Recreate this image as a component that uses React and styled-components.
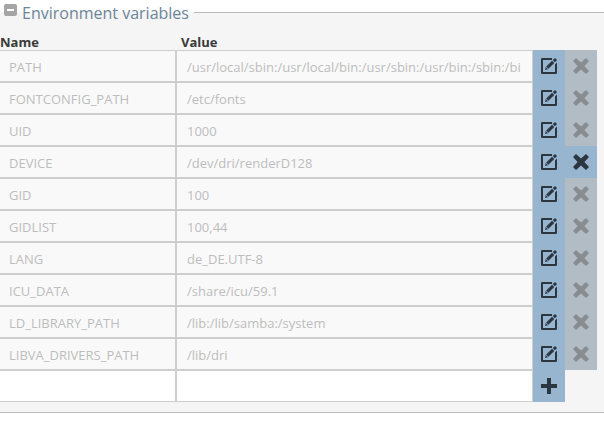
import React from "react";
import styled, { createGlobalStyle } from "styled-components";

const GlobalStyle = createGlobalStyle`
  * {
    box-sizing: border-box;
  }
  body {
    margin: 0;
    background-color: #ffffff;
    font-family: "Open Sans", "Noto Sans", sans-serif;
    font-size: 13px;
    overflow-x: hidden;
  }
`;

const Section = styled.fieldset`
  min-width: 0;
  margin: 0;
  padding: 9px 7px 10px 0;
  border: solid #bbbbbb;
  border-width: 1px 0;
  background-color: #f5f5f5;
`;

const Legend = styled.legend`
  display: flex;
  align-items: center;
  height: 25px;
  padding: 0 5px 0 4px;
  font-size: 16px;
  line-height: 24px;
  color: #6c8599;
`;

const Toggle = styled.button`
  display: flex;
  align-self: flex-start;
  margin: 4px 5px 0 0;
  padding: 0;
  border: none;
  background: none;
  cursor: pointer;
`;

const Table = styled.table`
  width: 100%;
  table-layout: fixed;
  border-collapse: collapse;
`;

const Heading = styled.th`
  width: ${({ $width }) => $width || "auto"};
  height: 16px;
  padding: 0 0 0 ${({ $indent }) => $indent || "0"};
  font-weight: 700;
  line-height: 16px;
  text-align: left;
  color: #3a3a3a;
`;

const Cell = styled.td`
  height: 32px;
  padding: 0;
`;

const Field = styled.input`
  display: block;
  width: 100%;
  height: 32px;
  margin: 0;
  padding: 2px 11px 0 10px;
  border: 1px solid #cecece;
  border-radius: 0;
  background-color: #ffffff;
  color: #444444;
  font: inherit;
  &:disabled {
    background-color: #f9f9f9;
    color: #bdbdbd;
  }
`;

const NameField = styled(Field)`
  padding-left: 9px;
  border-left: none;
`;

const IconButton = styled.button`
  display: flex;
  align-items: center;
  justify-content: center;
  width: 100%;
  height: 32px;
  padding: 0;
  border: none;
  background-color: #98b5cf;
  color: #2b3640;
  cursor: pointer;
  &:disabled {
    background-color: #b1bcc5;
    color: #898d90;
    cursor: default;
  }
`;

const variables = [
  { name: "PATH", value: "/usr/local/sbin:/usr/local/bin:/usr/sbin:/usr/bin:/sbin:/bin" },
  { name: "FONTCONFIG_PATH", value: "/etc/fonts" },
  { name: "UID", value: "1000" },
  { name: "DEVICE", value: "/dev/dri/renderD128", removable: true },
  { name: "GID", value: "100" },
  { name: "GIDLIST", value: "100,44" },
  { name: "LANG", value: "de_DE.UTF-8" },
  { name: "ICU_DATA", value: "/share/icu/59.1" },
  { name: "LD_LIBRARY_PATH", value: "/lib:/lib/samba:/system" },
  { name: "LIBVA_DRIVERS_PATH", value: "/lib/dri" },
];

function CollapseIcon() {
  return (
    <svg width="13" height="12" viewBox="0 0 13 12" aria-hidden="true">
      <rect width="13" height="12" rx="2" fill="#a5a5a5" />
      <rect x="3" y="5" width="7" height="2" fill="#ffffff" />
    </svg>
  );
}

function EditIcon() {
  return (
    <svg width="16" height="16" viewBox="0 0 16 16" aria-hidden="true">
      <path
        d="M11 0V2H2V14H14V6.4L16 4.4V15Q16 16 15 16H1Q0 16 0 15V1Q0 0 1 0Z"
        fill="currentColor"
      />
      <path d="M4 12L4.8 9L7 11.2Z" fill="currentColor" />
      <path d="M5.2 8.6L11.1 2.7L13.3 4.9L7.4 10.8Z" fill="currentColor" />
      <path d="M11.7 2.1L13.4 0.4Q14 0 14.6 0.4L15.6 1.4Q16 2 15.6 2.6L13.9 4.3Z" fill="currentColor" />
    </svg>
  );
}

function RemoveIcon() {
  return (
    <svg width="16" height="16" viewBox="0 0 16 16" aria-hidden="true">
      <path
        d="M3 0L8 4.6L13 0L16 3L11.4 8L16 13L13 16L8 11.4L3 16L0 13L4.6 8L0 3Z"
        fill="currentColor"
      />
    </svg>
  );
}

function AddIcon() {
  return (
    <svg width="16" height="16" viewBox="0 0 16 16" aria-hidden="true">
      <path d="M6 0H10V6H16V10H10V16H6V10H0V6H6Z" fill="currentColor" />
    </svg>
  );
}

function VariableRow({ name, value, removable }) {
  return (
    <tr>
      <Cell>
        <NameField aria-label="Name" defaultValue={name} disabled />
      </Cell>
      <Cell>
        <Field aria-label={`Value of ${name}`} defaultValue={value} disabled />
      </Cell>
      <Cell>
        <IconButton type="button" aria-label={`Edit ${name}`}>
          <EditIcon />
        </IconButton>
      </Cell>
      <Cell>
        <IconButton type="button" aria-label={`Remove ${name}`} disabled={!removable}>
          <RemoveIcon />
        </IconButton>
      </Cell>
    </tr>
  );
}

function App() {
  return (
    <>
      <GlobalStyle />
      <Section>
        <Legend>
          <Toggle type="button" aria-label="Collapse" aria-expanded="true">
            <CollapseIcon />
          </Toggle>
          Environment variables
        </Legend>
        <Table>
          <thead>
            <tr>
              <Heading $width="176px">Name</Heading>
              <Heading $indent="5px">Value</Heading>
              <Heading $width="32px" />
              <Heading $width="32px" />
            </tr>
          </thead>
          <tbody>
            {variables.map((variable) => (
              <VariableRow key={variable.name} {...variable} />
            ))}
            <tr>
              <Cell>
                <NameField aria-label="New name" />
              </Cell>
              <Cell>
                <Field aria-label="New value" />
              </Cell>
              <Cell>
                <IconButton type="button" aria-label="Add variable">
                  <AddIcon />
                </IconButton>
              </Cell>
              <Cell />
            </tr>
          </tbody>
        </Table>
      </Section>
    </>
  );
}

export default App;
